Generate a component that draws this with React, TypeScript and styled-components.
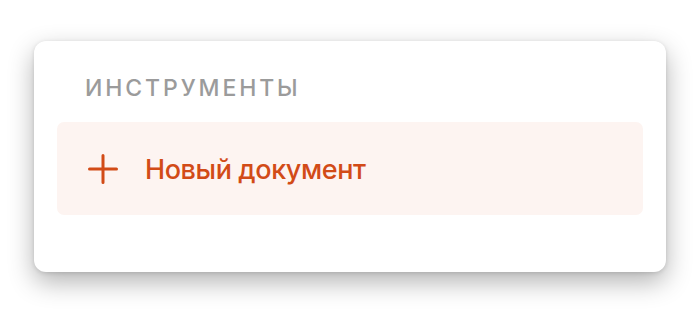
import React from "react";
import styled, { createGlobalStyle } from "styled-components";

const GlobalStyle = createGlobalStyle`
  html, body {
    margin: 0;
    padding: 0;
    background: #ffffff;
  }
  body {
    font-family: Inter, "Noto Sans", "Liberation Sans", sans-serif;
  }
`;

const Page = styled.div`
  width: 700px;
  height: 313px;
  box-sizing: border-box;
  padding: 41px 34px 0 34px;
`;

const Card = styled.section`
  box-sizing: border-box;
  width: 632px;
  height: 231px;
  background: #ffffff;
  border-radius: 12px;
  padding: 34px 23px 0 23px;
  box-shadow: 0 10px 26px rgba(0, 0, 0, 0.3), 0 1px 4px rgba(0, 0, 0, 0.12);
`;

const SectionTitle = styled.h2`
  margin: 0 0 20px 28px;
  font-size: 23px;
  line-height: 27px;
  font-weight: 500;
  letter-spacing: 2.9px;
  color: #9b9b9b;
  text-transform: uppercase;
`;

const ActionRow = styled.button`
  display: flex;
  align-items: center;
  gap: 27px;
  width: 100%;
  height: 93px;
  box-sizing: border-box;
  padding: 0 0 0 31px;
  border: none;
  border-radius: 7px;
  background: #fdf4f1;
  color: #d24b17;
  font-family: inherit;
  cursor: pointer;
  text-align: left;
`;

const ActionLabel = styled.span`
  font-size: 27px;
  font-weight: 500;
  letter-spacing: -0.4px;
  line-height: 1;
  padding-top: 2px;
`;

const PlusIcon = () => (
  <svg width="30" height="30" viewBox="0 0 30 30" fill="none">
    <path
      d="M15 1.5V28.5M1.5 15H28.5"
      stroke="currentColor"
      strokeWidth="3"
      strokeLinecap="round"
    />
  </svg>
);

export default function App() {
  return (
    <Page>
      <GlobalStyle />
      <Card>
        <SectionTitle>Инструменты</SectionTitle>
        <ActionRow type="button">
          <PlusIcon />
          <ActionLabel>Новый документ</ActionLabel>
        </ActionRow>
      </Card>
    </Page>
  );
}
